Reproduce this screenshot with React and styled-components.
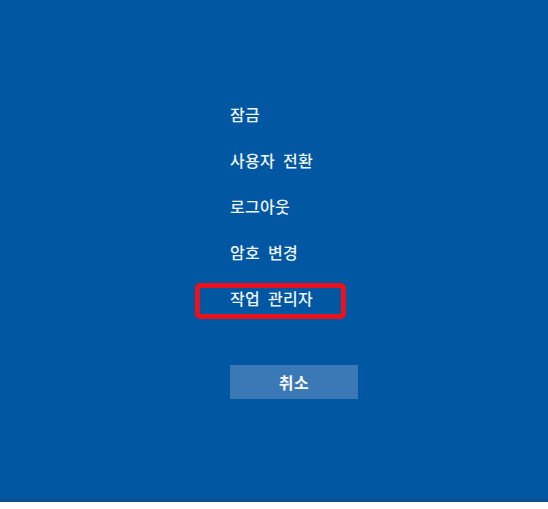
import React from "react";
import styled, { createGlobalStyle } from "styled-components";

const Global = createGlobalStyle`
  html, body { margin: 0; padding: 0; background: #ffffff; }
  body { font-family: "Noto Sans CJK KR", "Noto Sans", sans-serif; }
`;

const Screen = styled.div`
  width: 548px;
  height: 502px;
  box-sizing: border-box;
  background: #0157a1;
  border-bottom: 3px solid #0b4f8c;
  padding: 91px 0 0 230px;
`;

const Menu = styled.ul`
  list-style: none;
  margin: 0;
  padding: 0;
  display: flex;
  flex-direction: column;
`;

const Item = styled.li`
  position: relative;
  height: 46px;
  line-height: 46px;
  font-size: 16px;
  font-weight: 500;
  letter-spacing: 0.3px;
  word-spacing: 4px;
  color: #eef4fb;
  white-space: nowrap;

  ${(p) =>
    p.$marked &&
    `
    &::before {
      content: "";
      position: absolute;
      left: -35px;
      top: 8px;
      width: 151px;
      height: 36px;
      box-sizing: border-box;
      border: 5px solid #e8111c;
      border-radius: 5px;
    }
  `}
`;

const CancelButton = styled.button`
  margin-top: 44px;
  width: 128px;
  height: 34px;
  border: none;
  padding: 0;
  background: #3b78b6;
  color: #f4f8fc;
  font-family: "Noto Sans CJK KR", "Noto Sans", sans-serif;
  font-size: 16px;
  font-weight: 700;
  letter-spacing: 0.5px;
`;

const items = ["잠금", "사용자 전환", "로그아웃", "암호 변경", "작업 관리자"];

export default function App() {
  return (
    <>
      <Global />
      <Screen>
        <Menu>
          {items.map((t, i) => (
            <Item key={t} $marked={i === 4}>
              {t}
            </Item>
          ))}
        </Menu>
        <CancelButton>취소</CancelButton>
      </Screen>
    </>
  );
}
